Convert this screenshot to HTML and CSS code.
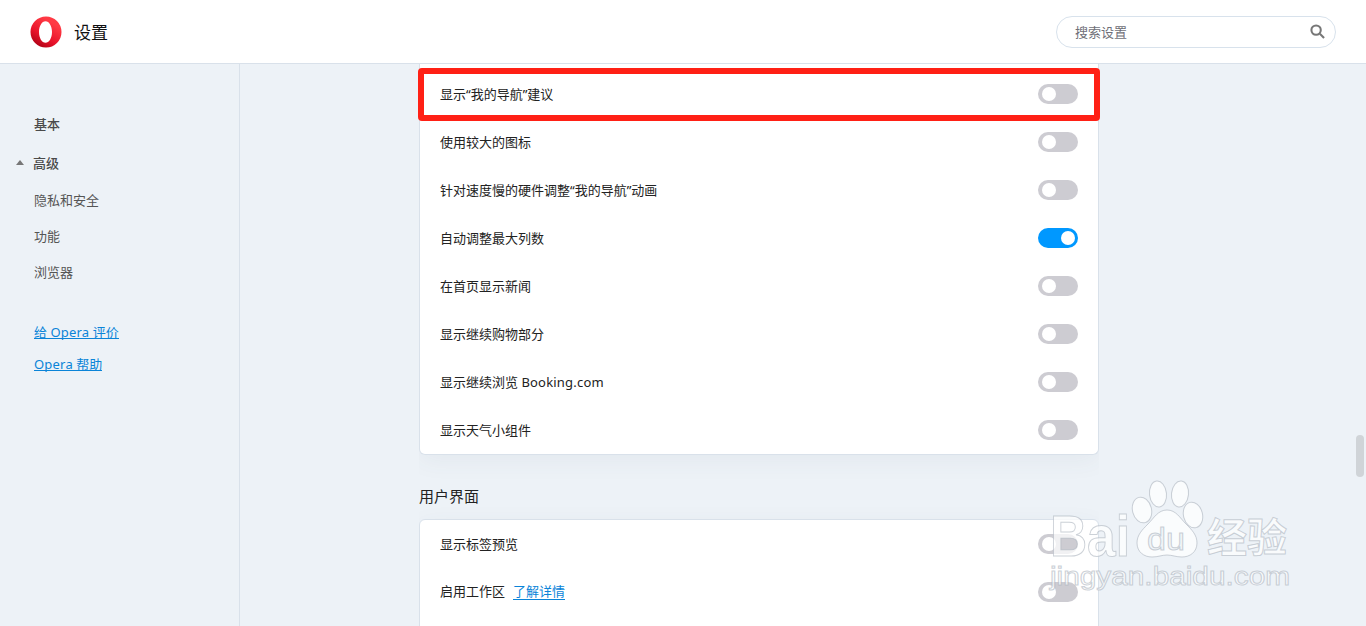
FILE: index.html
```html
<!DOCTYPE html>
<html lang="zh-CN">
<head>
  <meta charset="UTF-8">
  <meta name="viewport" content="width=device-width, initial-scale=1.0">
  <title>设置</title>
  <link rel="stylesheet" href="styles.css">
</head>
<body>
  <header class="top-bar">
    <svg class="logo" width="32" height="32" viewBox="0 0 32 32">
      <defs>
        <linearGradient id="operaRed" x1="0.7" y1="0.2" x2="0.2" y2="1">
          <stop offset="0" stop-color="#ff3a44"/>
          <stop offset="0.55" stop-color="#e8132a"/>
          <stop offset="1" stop-color="#a70014"/>
        </linearGradient>
      </defs>
      <path fill="url(#operaRed)" fill-rule="evenodd" d="M16 0.500a15.500 15.500 0 1 0 0 31a15.500 15.500 0 1 0 0-31zM15.500 5.200c3.600 0 6.500 4.800 6.500 10.800s-2.900 10.800-6.500 10.800s-6.500-4.800-6.500-10.800s2.900-10.800 6.500-10.800z"/>
    </svg>
    <span class="page-title">设置</span>
    <div class="search">
      <span class="search-text">搜索设置</span>
      <svg width="15" height="15" viewBox="0 0 16 16" fill="none" stroke="#777" stroke-width="2.200">
        <circle cx="6.500" cy="6.500" r="5"/>
        <path d="M10.500 10.500l4.500 4.500"/>
      </svg>
    </div>
  </header>

  <div class="layout">
    <nav class="sidebar">
      <div class="nav-item nav-strong">基本</div>
      <div class="nav-item nav-strong nav-open">高级</div>
      <div class="nav-item nav-sub">隐私和安全</div>
      <div class="nav-item">功能</div>
      <div class="nav-item">浏览器</div>
      <div class="nav-links">
        <a class="nav-link" href="#">给 <span class="latin">Opera</span> 评价</a>
        <a class="nav-link" href="#"><span class="latin">Opera</span> 帮助</a>
      </div>
    </nav>

    <main class="content">
      <section class="card card-cut">
        <div class="row"><span class="row-text">显示“我的导航”建议</span><span class="toggle"></span></div>
        <div class="row"><span class="row-text">使用较大的图标</span><span class="toggle"></span></div>
        <div class="row"><span class="row-text">针对速度慢的硬件调整“我的导航”动画</span><span class="toggle"></span></div>
        <div class="row"><span class="row-text">自动调整最大列数</span><span class="toggle on"></span></div>
        <div class="row"><span class="row-text">在首页显示新闻</span><span class="toggle"></span></div>
        <div class="row"><span class="row-text">显示继续购物部分</span><span class="toggle"></span></div>
        <div class="row"><span class="row-text">显示继续浏览 <span class="latin">Booking.com</span></span><span class="toggle"></span></div>
        <div class="row"><span class="row-text">显示天气小组件</span><span class="toggle"></span></div>
      </section>

      <h2 class="section-title">用户界面</h2>
      <section class="card">
        <div class="row"><span class="row-text">显示标签预览</span><span class="toggle"></span></div>
        <div class="row"><span class="row-text">启用工作区<a class="row-link" href="#">了解详情</a></span><span class="toggle"></span></div>
        <div class="row"></div>
      </section>
    </main>
  </div>

  <!-- annotation and watermark, both lie over the page -->
  <div class="red-box"></div>
  <div class="scroll-thumb"></div>
  <svg class="watermark" width="250" height="120" viewBox="0 0 250 120">
    <g class="wm-shape">
      <ellipse cx="112" cy="16" rx="8.500" ry="13" transform="rotate(-6 112 16)"/>
      <ellipse cx="134" cy="16" rx="8.500" ry="13" transform="rotate(6 134 16)"/>
      <ellipse cx="96" cy="32" rx="9.500" ry="13" transform="rotate(-14 96 32)"/>
      <ellipse cx="147" cy="37" rx="9.500" ry="13" transform="rotate(-14 147 37)"/>
      <path d="M121 32c9 0 13 8 19 14c6 6 11 11 11 19c0 9-7 14-15 14c-6 0-10-2-15-2s-9 2-15 2c-8 0-15-5-15-14c0-8 5-13 11-19c6-6 10-14 19-14z"/>
    </g>
    <text class="wm-text wm-bai" x="4" y="78" textLength="80" lengthAdjust="spacingAndGlyphs">Bai</text>
    <text class="wm-text wm-du" x="101" y="72" textLength="38" lengthAdjust="spacingAndGlyphs">du</text>
    <text class="wm-text wm-cn" x="161" y="74" textLength="80" lengthAdjust="spacingAndGlyphs">经验</text>
    <text class="wm-text wm-url" x="4" y="107" textLength="240" lengthAdjust="spacingAndGlyphs">jingyan.baidu.com</text>
  </svg>
</body>
</html>
```

FILE: styles.css
```css
html, body {
  height: 100%;
}

body {
  font-family: "Noto Sans", "Noto Sans CJK SC", sans-serif;
  font-size: 13px;
  color: #222;
  background: #edf2f7;
  margin: 0;
  overflow: hidden;
}

.latin {
  letter-spacing: 0.2px;
}

.top-bar {
  display: flex;
  align-items: center;
  height: 63px;
  padding: 0 30px;
  background: #fff;
  border-bottom: 1px solid #d9e1ea;
}

.logo {
  flex-shrink: 0;
}

.page-title {
  margin-left: 12px;
  font-size: 17px;
  color: #111;
}

.search {
  display: flex;
  align-items: center;
  justify-content: space-between;
  box-sizing: border-box;
  width: 280px;
  height: 32px;
  margin-left: auto;
  padding: 0 10px 0 18px;
  border: 1px solid #d8e2ec;
  border-radius: 16px;
}

.search-text {
  color: #6f6f78;
}

.layout {
  display: flex;
  height: 562px;
  overflow: hidden;
}

.sidebar {
  box-sizing: border-box;
  width: 240px;
  flex-shrink: 0;
  padding-top: 42px;
  padding-left: 34px;
  border-right: 1px solid #d9e1ea;
  color: #555;
}

.nav-item {
  height: 36px;
  line-height: 36px;
}

.nav-strong {
  font-weight: 500;
  color: #4a4a4a;
}

.nav-open {
  display: flex;
  align-items: center;
  margin-top: 3px;
  margin-left: -18px;
  gap: 9px;
}

.nav-open::before {
  content: "";
  width: 0;
  height: 0;
  margin-bottom: 2px;
  border-left: 4px solid transparent;
  border-right: 4px solid transparent;
  border-bottom: 5px solid #777;
}

.nav-sub {
  margin-top: 1px;
}

.nav-links {
  display: flex;
  flex-direction: column;
  align-items: flex-start;
  margin-top: 26px;
}

.nav-link {
  height: 32px;
  line-height: 32px;
  color: #0a84d8;
  text-decoration: none;
  background: linear-gradient(#0a84d8, #0a84d8) 0 22px / 100% 1px no-repeat;
}

.content {
  margin-left: 179px;
  width: 680px;
  overflow: hidden;
}

.card {
  box-sizing: border-box;
  width: 680px;
  background: #fff;
  border: 1px solid #d9e1ea;
  border-radius: 6px;
  box-shadow: 0 6px 24px rgba(60, 80, 110, 0.06);
}

.card-cut {
  padding-top: 6px;
  border-top: none;
  border-radius: 0 0 6px 6px;
}

.row {
  display: flex;
  align-items: center;
  justify-content: space-between;
  height: 48px;
  padding: 0 20px;
}

.row-text {
  padding-bottom: 2px;
}

.row-link {
  margin-left: 8px;
  display: inline-block;
  height: 24px;
  line-height: 24px;
  color: #0a84d8;
  text-decoration: none;
  background: linear-gradient(#0a84d8, #0a84d8) 0 20px / 100% 1px no-repeat;
}

.section-title {
  margin: 30px 0 11px 0;
  height: 23px;
  line-height: 23px;
  font-size: 15px;
  font-weight: 400;
  color: #222;
}

.toggle {
  box-sizing: border-box;
  display: flex;
  align-items: center;
  justify-content: flex-start;
  width: 40px;
  height: 20px;
  padding: 0 3px 0 4px;
  border-radius: 10px;
  background: #cdccd2;
}

.toggle::before {
  content: "";
  width: 14px;
  height: 14px;
  border-radius: 50%;
  background: #fff;
}

.toggle.on {
  justify-content: flex-end;
  background: #0098ff;
}

.red-box {
  position: absolute;
  left: 418px;
  top: 68px;
  box-sizing: border-box;
  width: 682px;
  height: 53px;
  border: 6px solid #ff2015;
  border-radius: 4px;
}

.scroll-thumb {
  position: absolute;
  left: 1356px;
  top: 435px;
  width: 8px;
  height: 42px;
  border-radius: 4px;
  background: #d0d4d8;
}

.watermark {
  position: absolute;
  left: 1046px;
  top: 478px;
  pointer-events: none;
}

.wm-shape ellipse,
.wm-shape path {
  fill: rgba(255, 255, 255, 0.72);
  stroke: rgba(170, 178, 188, 0.6);
  stroke-width: 1;
}

.wm-text {
  fill: rgba(255, 255, 255, 0.72);
  stroke: rgba(170, 178, 188, 0.6);
  stroke-width: 1;
}

.wm-bai {
  font-family: "Liberation Sans", sans-serif;
  font-weight: 700;
  font-size: 57px;
}

.wm-du {
  font-family: "Liberation Sans", sans-serif;
  font-size: 32px;
  fill: rgba(237, 242, 247, 0.7);
}

.wm-cn {
  font-family: "Noto Sans CJK SC", sans-serif;
  font-weight: 700;
  font-size: 40px;
}

.wm-url {
  font-family: "Liberation Sans", sans-serif;
  font-size: 25px;
}
```
